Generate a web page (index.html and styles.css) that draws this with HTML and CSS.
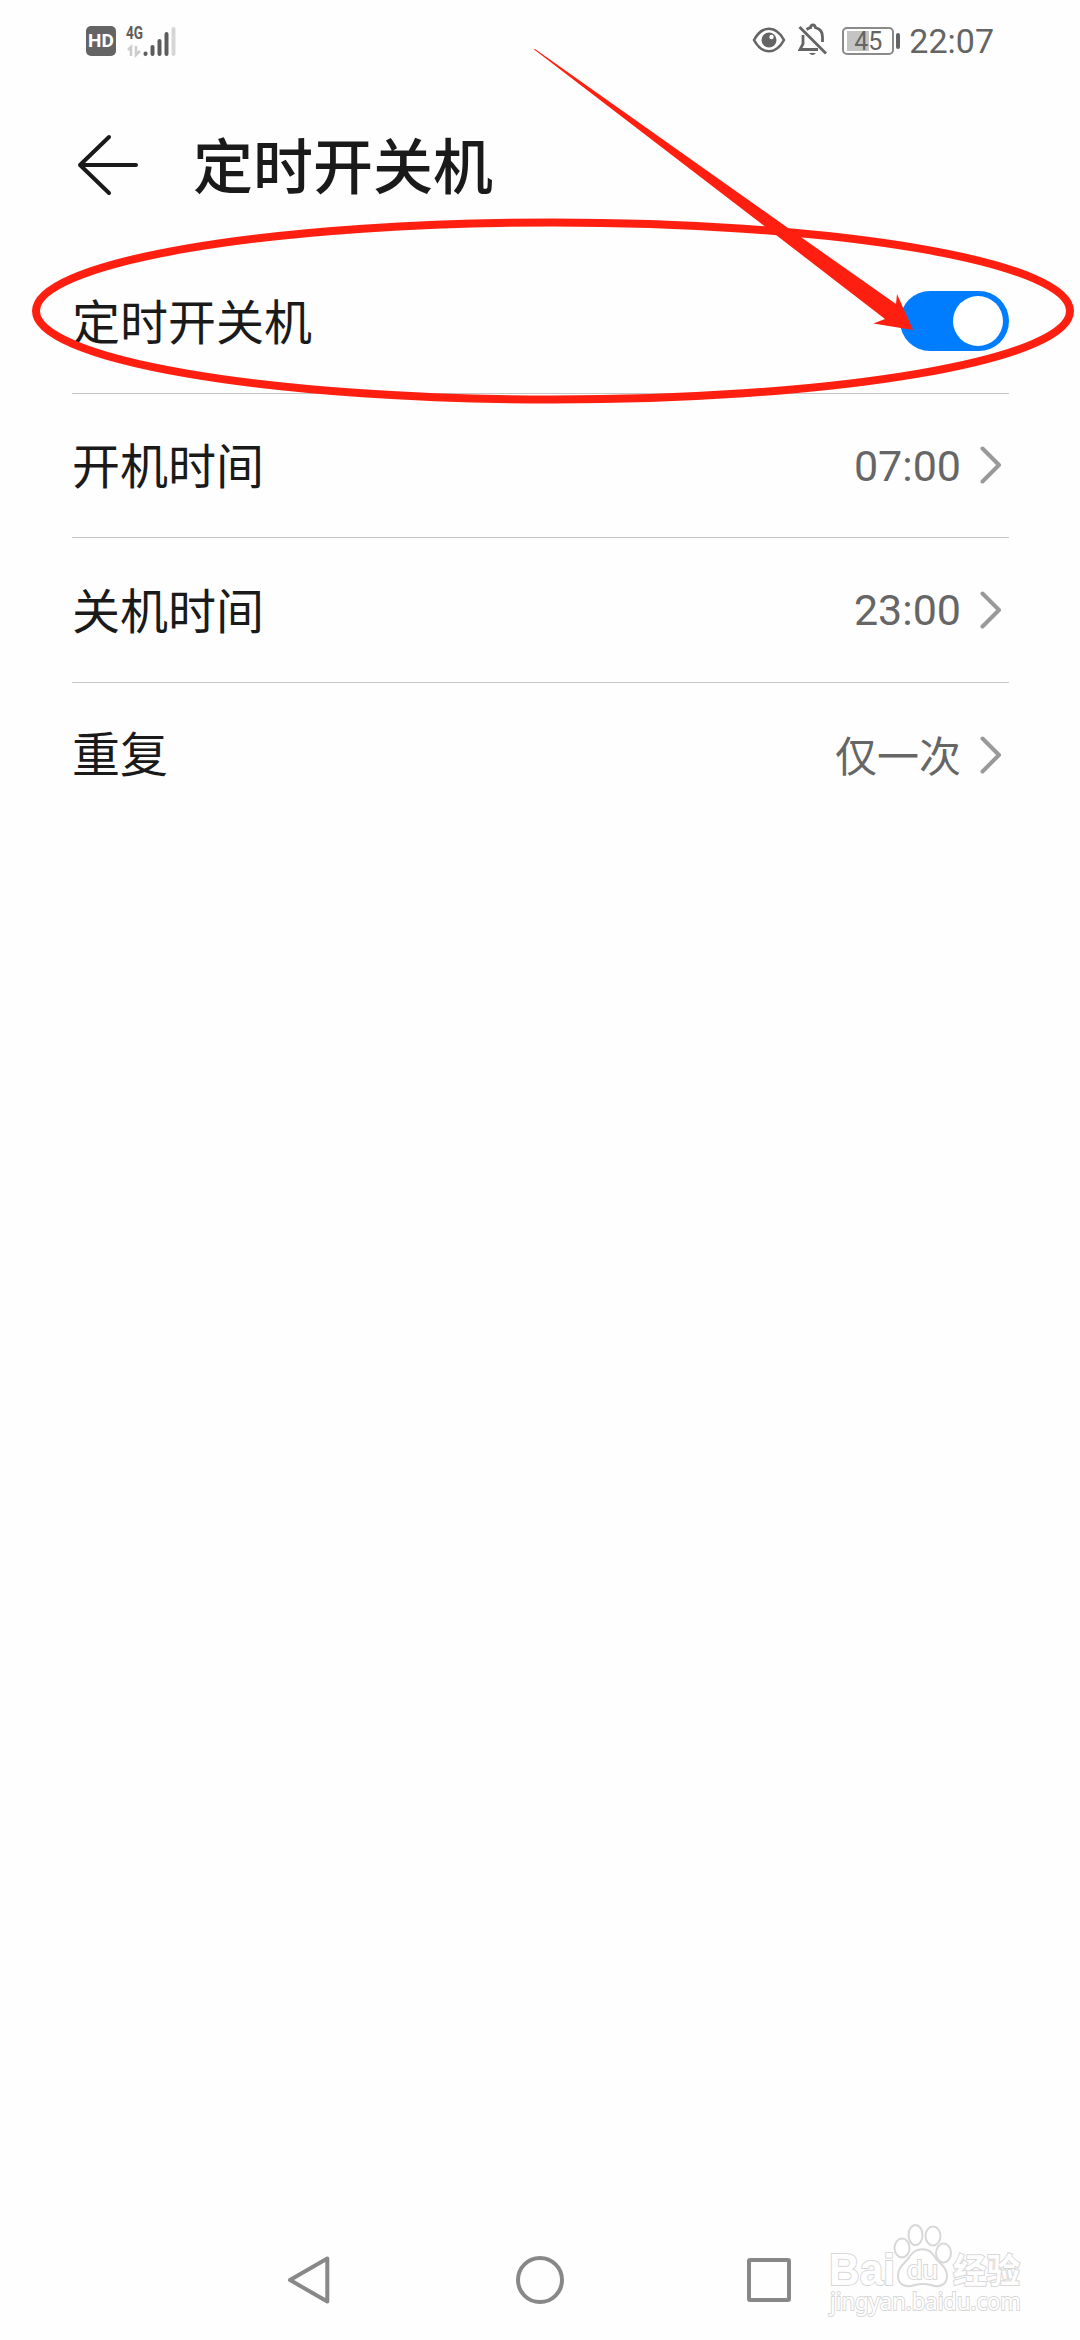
FILE: index.html
```html
<!DOCTYPE html>
<html lang="zh-CN">
<head>
    <meta charset="UTF-8">
    <meta name="viewport" content="width=device-width, initial-scale=1.0">
    <title>定时开关机</title>
    <link rel="stylesheet" href="styles.css">
</head>
<body>
    <div class="screen">
        <div class="status-bar">
            <div class="status-left">
                <span class="hd">HD</span>
                <svg class="signal" width="52" height="40" viewBox="0 0 52 40">
                    <text class="net" x="2" y="18" textLength="17" lengthAdjust="spacingAndGlyphs">4G</text>
                    <path d="M7 35V26L4 29M12 25V34L16 30" fill="none" stroke="#ccc" stroke-width="2.500"/>
                    <g stroke="#5c5c5c" stroke-width="4" stroke-linecap="round">
                        <path d="M21.500 32.500V33M28.500 26V33M35.500 20V33M42.500 13V33"/>
                        <path d="M49.500 8V33" stroke="#d6d6d6"/>
                    </g>
                </svg>
            </div>
            <div class="status-right">
                <svg class="eye" width="34" height="28" viewBox="0 0 34 28">
                    <path d="M2 14C10-1 24-1 32 14C24 29 10 29 2 14Z" fill="none" stroke="#646464" stroke-width="2.600" stroke-linejoin="round"/>
                    <circle cx="17" cy="14" r="7.500" fill="#646464"/>
                    <circle cx="19.500" cy="11" r="2.200" fill="#fff"/>
                </svg>
                <svg class="bell" width="30" height="34" viewBox="0 0 30 34">
                    <g fill="none" stroke="#646464" stroke-width="2.800">
                        <path d="M1.500 4L28 30.500"/>
                        <path d="M5 12V21L2 26.500H20"/>
                        <path d="M8.500 6.500Q11 4.800 12.500 4.700Q12.500 2 15 2Q17 2 17.500 4.700Q24.500 6.500 24.500 14V19"/>
                    </g>
                    <path d="M11 30H18Q14.500 34 11 30Z" fill="#646464"/>
                </svg>
                <div class="battery"><span>45</span></div>
                <div class="battery-cap"></div>
                <span class="clock">22:07</span>
            </div>
        </div>

        <header class="header">
            <svg class="back" width="62" height="62" viewBox="0 0 62 62">
                <path d="M33 3L4 31L33 59M4 31H60" fill="none" stroke="#1a1a1a" stroke-width="4" stroke-linecap="round" stroke-linejoin="round"/>
            </svg>
            <h1>定时开关机</h1>
        </header>

        <main class="list">
            <div class="row">
                <span class="label">定时开关机</span>
                <div class="switch"></div>
            </div>
            <div class="row">
                <span class="label">开机时间</span>
                <span class="value">07:00</span>
                <svg class="chevron" width="22" height="38" viewBox="0 0 22 38"><path d="M2.500 2.500L19 19L2.500 35.500"/></svg>
            </div>
            <div class="row">
                <span class="label">关机时间</span>
                <span class="value">23:00</span>
                <svg class="chevron" width="22" height="38" viewBox="0 0 22 38"><path d="M2.500 2.500L19 19L2.500 35.500"/></svg>
            </div>
            <div class="row">
                <span class="label">重复</span>
                <span class="value value-text">仅一次</span>
                <svg class="chevron" width="22" height="38" viewBox="0 0 22 38"><path d="M2.500 2.500L19 19L2.500 35.500"/></svg>
            </div>
        </main>

        <nav class="nav-bar">
            <svg width="52" height="52" viewBox="0 0 52 52"><path d="M42.300 4.500V47.500L5 26Z"/></svg>
            <svg width="52" height="52" viewBox="0 0 52 52"><circle cx="26" cy="26" r="22"/></svg>
            <svg width="52" height="52" viewBox="0 0 52 52"><rect x="6" y="6" width="40" height="40" rx="1"/></svg>
        </nav>

        <!-- red marker over the switch row -->
        <svg class="marker" width="1080" height="440" viewBox="0 0 1080 440">
            <ellipse cx="553" cy="311" rx="517" ry="88.500" fill="none" stroke="#ff1f10" stroke-width="8"/>
            <path d="M533.500 49L535 49L788 228L896 304L897 294L913 330L873.500 323.500L885 319L776 235Z" fill="#ff1f10"/>
        </svg>

        <svg class="watermark" width="230" height="112" viewBox="0 0 230 112">
            <text class="wm-logo" x="7" y="65" textLength="66" lengthAdjust="spacingAndGlyphs">Bai</text>
            <g class="paw">
                <ellipse cx="80" cy="28" rx="7.500" ry="9.500"/>
                <ellipse cx="93.500" cy="15" rx="7" ry="10"/>
                <ellipse cx="111" cy="16" rx="7.500" ry="9.500"/>
                <ellipse cx="121.500" cy="33" rx="7.500" ry="9.500"/>
                <path d="M88 36C94 27 107 27 112 36C116 43 125 46 125 56C125 65 117 68 109 65Q101 63 93 65C84 68 76 65 76 56C76 46 84 43 88 36Z"/>
            </g>
            <text class="wm-du" x="85" y="59" textLength="31" lengthAdjust="spacingAndGlyphs">du</text>
            <text class="wm-cn" x="131" y="63" textLength="67" lengthAdjust="spacingAndGlyphs">经验</text>
            <text class="wm-url" x="8" y="90" textLength="191" lengthAdjust="spacingAndGlyphs">jingyan.baidu.com</text>
        </svg>
    </div>
</body>
</html>
```
FILE: styles.css
```css
* {
    margin: 0;
    padding: 0;
    box-sizing: border-box;
}

body {
    background: #fefefe;
    color: #1a1a1a;
    font-family: Roboto, 'Noto Sans CJK SC', sans-serif;
}

.screen {
    position: relative;
    display: flex;
    flex-direction: column;
    width: 1080px;
    height: 2340px;
    overflow: hidden;
}

svg {
    display: block;
    flex: none;
}

.status-bar {
    display: flex;
    justify-content: space-between;
    height: 82px;
    padding: 0 86px;
    color: #646464;
}

.status-left, .status-right {
    display: flex;
    align-items: center;
    height: 82px;
}

.hd {
    width: 30px;
    height: 30px;
    border-radius: 5px;
    background: #646464;
    color: #fff;
    font-size: 19px;
    font-weight: 700;
    line-height: 30px;
    text-align: center;
}

.signal {
    margin-left: 8px;
}

.net {
    font-size: 18px;
    font-weight: 700;
    fill: #5c5c5c;
}

.eye {
    margin-top: -2px;
}

.bell {
    margin: -2px 0 0 12px;
}

.battery {
    width: 52px;
    height: 28px;
    margin-left: 14px;
    padding: 3px;
    border: 2px solid #8a8a8a;
    border-radius: 5px;
    background: linear-gradient(to right, #c4c4c4 22px, transparent 22px) 3px 2px / 44px 20px no-repeat;
    font-size: 25px;
    line-height: 19px;
    text-align: center;
}

.battery-cap {
    width: 4px;
    height: 16px;
    margin-left: 2px;
    border-radius: 2px;
    background: #646464;
}

.clock {
    margin-left: 9px;
    font-size: 34px;
}

.header {
    display: flex;
    align-items: center;
    height: 167px;
    padding: 0 0 1px 76px;
}

h1 {
    margin: 8px 0 0 55px;
    font-size: 60px;
    font-weight: 500;
    line-height: 88px;
}

.list {
    display: flex;
    flex-direction: column;
    padding: 0 71px 0 72px;
}

.row {
    display: flex;
    align-items: center;
    height: 144.500px;
    border-bottom: 1px solid #c6c6c6;
}

.row:last-child {
    border-bottom: none;
}

.label {
    flex: 1;
    padding-top: 6px;
    font-size: 48px;
    line-height: 70px;
}

.row:last-child .label {
    padding-top: 2px;
}

.value {
    padding-top: 1px;
    color: #666;
    font-size: 43px;
}

.value-text {
    padding: 0 0 3px;
    font-size: 42px;
}

.chevron {
    margin: 0 7px 0 19px;
}

.chevron path {
    fill: none;
    stroke: #999;
    stroke-width: 4;
    stroke-linecap: round;
    stroke-linejoin: round;
}

.switch {
    display: flex;
    justify-content: flex-end;
    width: 109px;
    height: 60px;
    padding: 5px 6px;
    border-radius: 30px;
    background: #007dff;
}

.switch::after {
    content: '';
    width: 50px;
    height: 50px;
    border-radius: 50%;
    background: #fff;
}

.nav-bar {
    display: flex;
    align-items: center;
    justify-content: space-between;
    height: 120px;
    margin-top: auto;
    padding: 0 285px;
}

.nav-bar svg {
    fill: none;
    stroke: #888;
    stroke-width: 4;
    stroke-linejoin: round;
}

.marker {
    position: absolute;
    top: 0;
    left: 0;
}

.watermark {
    position: absolute;
    top: 2220px;
    left: 822px;
    fill: #fff;
    stroke: #d8d8d8;
    stroke-width: 2;
}

.watermark text {
    paint-order: stroke;
}

.wm-logo {
    font-family: 'Liberation Sans', sans-serif;
    font-size: 45px;
    font-weight: 700;
}

.wm-du {
    font-family: 'Liberation Sans', sans-serif;
    font-size: 26px;
}

.wm-cn {
    font-family: 'Noto Sans CJK SC', sans-serif;
    font-size: 34px;
    font-weight: 700;
}

.wm-url {
    font-family: 'Noto Sans', sans-serif;
    font-size: 24px;
}
```
